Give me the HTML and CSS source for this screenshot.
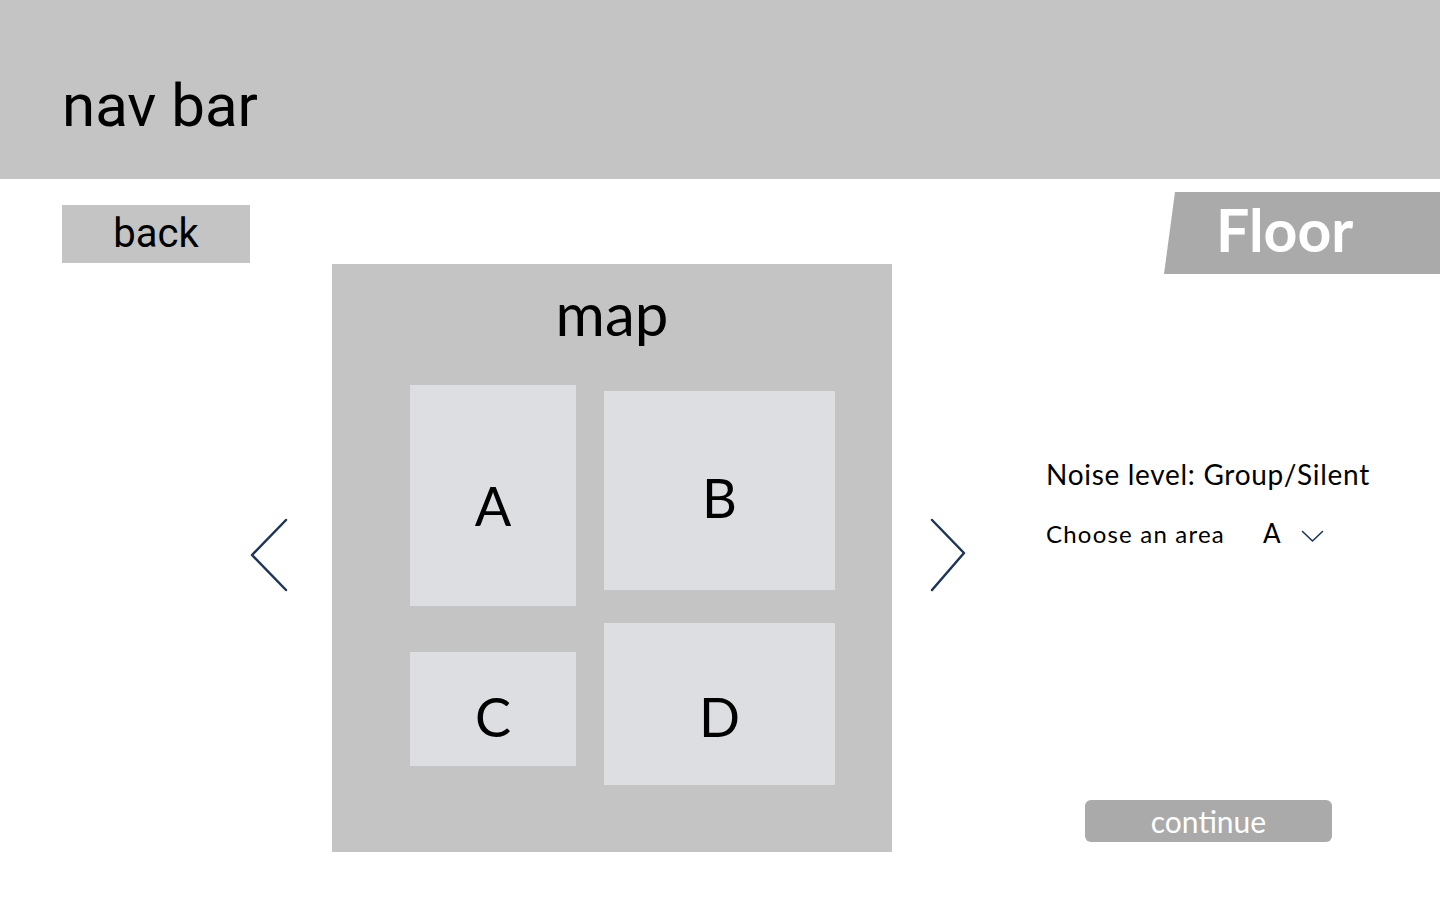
FILE: index.html
```html
<!DOCTYPE html>
<html lang="en">
<head>
<meta charset="utf-8">
<title>Floor</title>
<link rel="stylesheet" href="styles.css">
</head>
<body>
<header class="navbar"><span class="navbar-title">nav bar</span></header>
<main class="content">
  <div class="col-left">
    <button class="back-btn">back</button>
    <svg class="chev chev-left" viewBox="0 0 40 76" width="40" height="76"><polyline points="38,3 4,38 38,73" fill="none" stroke="#1d3557" stroke-width="2.5" stroke-linecap="round" stroke-linejoin="round"/></svg>
  </div>
  <section class="map">
    <h2 class="map-title">map</h2>
    <div class="room room-a">A</div>
    <div class="room room-b">B</div>
    <div class="room room-c">C</div>
    <div class="room room-d">D</div>
  </section>
  <div class="col-right">
    <div class="floor-tab">Floor</div>
    <div class="info-row">
      <svg class="chev chev-right" viewBox="0 0 40 76" width="40" height="76"><polyline points="4,3 36,36 4,73" fill="none" stroke="#1d3557" stroke-width="2.5" stroke-linecap="round" stroke-linejoin="round"/></svg>
      <div class="info">
        <p class="noise">Noise level: Group/Silent</p>
        <div class="choose">
          <span class="choose-label">Choose an area</span>
          <span class="choose-value">A</span>
          <svg class="caret" viewBox="0 0 23 13" width="23" height="13"><polyline points="1.5,1.5 11.5,11 21.5,1.5" fill="none" stroke="#1d3557" stroke-width="1.6" stroke-linecap="round" stroke-linejoin="round"/></svg>
        </div>
      </div>
    </div>
    <button class="continue-btn">continue</button>
  </div>
</main>
</body>
</html>
```

FILE: styles.css
```css
* { box-sizing: border-box; }
html, body { margin: 0; padding: 0; }
body {
  width: 1440px;
  height: 900px;
  overflow: hidden;
  background: #ffffff;
  font-family: Lato, "Open Sans", sans-serif;
  color: #000;
}
.navbar {
  height: 179px;
  background: #c4c4c4;
  display: flex;
  align-items: flex-start;
  padding-left: 62px;
  padding-top: 71px;
}
.navbar-title {
  font-family: Roboto, sans-serif;
  font-size: 60px;
  line-height: 70px;
  color: #000;
}
.content {
  display: flex;
  align-items: flex-start;
  height: 721px;
}
.col-left {
  width: 332px;
  flex: none;
  display: flex;
  flex-direction: column;
  align-items: flex-start;
}
.back-btn {
  margin-left: 62px;
  margin-top: 26px;
  width: 188px;
  height: 58px;
  border: none;
  background: #c4c4c4;
  font-family: Roboto, sans-serif;
  font-size: 40px;
  line-height: 58px;
  padding: 0;
  color: #000;
}
.chev { display: block; flex: none; }
.chev-left { margin-left: 248px; margin-top: 254px; }
.map {
  position: relative;
  flex: none;
  width: 560px;
  height: 588px;
  margin-top: 85px;
  background: #c4c4c4;
}
.map-title {
  margin: 0;
  padding-top: 14px;
  text-align: center;
  font-weight: 400;
  font-size: 60px;
  line-height: 70px;
}
.room {
  position: absolute;
  background: #dddee2;
  display: flex;
  align-items: center;
  justify-content: center;
  font-size: 54px;
}
.room-a { left: 78px; top: 121px; width: 166px; height: 221px; padding-top: 20px; }
.room-b { left: 272px; top: 127px; width: 231px; height: 199px; padding-top: 14px; }
.room-c { left: 78px; top: 388px; width: 166px; height: 114px; padding-top: 14px; }
.room-d { left: 272px; top: 359px; width: 231px; height: 162px; padding-top: 24px; }
.col-right {
  flex: 1;
  display: flex;
  flex-direction: column;
}
.floor-tab {
  align-self: flex-end;
  margin-top: 13px;
  width: 276px;
  height: 82px;
  background: #aaaaaa;
  clip-path: polygon(11px 0, 100% 0, 100% 100%, 0 100%);
  color: #fff;
  font-weight: 700;
  font-size: 59px;
  line-height: 76px;
  padding-left: 52px;
}
.info-row {
  display: flex;
  align-items: flex-start;
  margin-top: 183px;
}
.chev-right { margin-left: 36px; margin-top: 60px; }
.info { margin-left: 78px; }
.noise {
  margin: 0;
  font-size: 28px;
  line-height: 34px;
  letter-spacing: 0.7px;
}
.choose {
  display: flex;
  align-items: baseline;
  margin-top: 27px;
}
.choose-label { font-size: 24px; line-height: 30px; letter-spacing: 1.2px; }
.choose-value { font-size: 26px; line-height: 30px; margin-left: 38px; }
.caret { margin-left: 20px; }
.continue-btn {
  margin-left: 193px;
  margin-top: 207px;
  width: 247px;
  height: 42px;
  border: none;
  border-radius: 6px;
  background: #aaaaaa;
  color: #fff;
  font-family: Lato, sans-serif;
  font-size: 30px;
  line-height: 42px;
  padding: 0;
}
```
